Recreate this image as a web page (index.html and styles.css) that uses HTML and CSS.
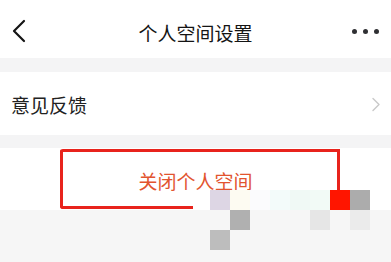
FILE: index.html
```html
<!DOCTYPE html>
<html lang="zh">
<head>
<meta charset="utf-8">
<link rel="stylesheet" href="styles.css">
</head>
<body>
<div class="page">
  <header class="nav">
    <svg class="back" width="14" height="24" viewBox="0 0 14 24"><path d="M12 2 L2 12 L12 22" fill="none" stroke="#151515" stroke-width="2.2" stroke-linecap="round" stroke-linejoin="round"/></svg>
    <h1 class="title">个人空间设置</h1>
    <div class="more"><span></span><span></span><span></span></div>
  </header>
  <div class="band"></div>
  <div class="row">
    <span class="row-label">意见反馈</span>
    <svg class="chev" width="10" height="15" viewBox="0 0 10 15"><path d="M2 1.5 L8 7.5 L2 13.5" fill="none" stroke="#c9c9c9" stroke-width="1.4" stroke-linecap="round" stroke-linejoin="round"/></svg>
  </div>
  <div class="band band2"></div>
  <div class="action">
    <span class="action-label">关闭个人空间</span>
  </div>
  <div class="footer"></div>

  <div class="mark"></div>
  <div class="px" style="left:210px;top:190px;background:#ddd6e4"></div>
  <div class="px" style="left:230px;top:190px;background:#fdfbf2"></div>
  <div class="px" style="left:250px;top:190px;background:#fbfbfd"></div>
  <div class="px" style="left:270px;top:190px;background:#f3fbfa"></div>
  <div class="px" style="left:290px;top:190px;background:#f0f9f5"></div>
  <div class="px" style="left:310px;top:190px;background:#f2faf6"></div>
  <div class="px" style="left:330px;top:190px;background:#ff1500"></div>
  <div class="px" style="left:350px;top:190px;background:#acacac"></div>
  <div class="px" style="left:230px;top:210px;background:#b0b0b0"></div>
  <div class="px" style="left:310px;top:210px;background:#e6e6e6"></div>
  <div class="px" style="left:350px;top:210px;background:#ebebeb"></div>
  <div class="px" style="left:210px;top:230px;background:#bdbdbd"></div>
</div>
</body>
</html>
```
FILE: styles.css
```css
* { box-sizing: border-box; margin: 0; padding: 0; }
html, body { width: 391px; height: 262px; overflow: hidden; }
body {
  background: #f6f6f6;
  font-family: "Noto Sans CJK SC", "Noto Sans", sans-serif;
}
.page { position: relative; width: 391px; height: 262px; }
.nav {
  height: 58px;
  background: #fff;
  display: flex;
  align-items: center;
  justify-content: center;
  position: relative;
}
.back { position: absolute; left: 12px; top: 19px; }
.title {
  font-size: 19px;
  font-weight: 400;
  color: #141414;
  line-height: 1;
  margin-top: 7px;
}
.more {
  position: absolute;
  right: 12px;
  top: 29px;
  display: flex;
  gap: 6px;
}
.more span {
  width: 5px; height: 5px;
  border-radius: 50%;
  background: #2f3033;
}
.band { height: 14px; background: #f4f4f5; }
.band2 { height: 13px; }
.row {
  height: 63px;
  background: #fff;
  display: flex;
  align-items: center;
  justify-content: space-between;
  padding: 0 10px 0 11px;
}
.row-label { font-size: 19px; color: #222; line-height: 1; margin-top: 1px; }
.chev { margin-top: 2px; }
.action {
  height: 62px;
  background: #fff;
  display: flex;
  align-items: center;
  justify-content: center;
}
.action-label {
  font-size: 19px;
  color: #e2542f;
  line-height: 1;
  margin-top: 3px;
}
.footer { height: 52px; background: #f6f6f6; }
.mark {
  position: absolute;
  left: 60px;
  top: 149px;
  width: 280px;
  height: 60px;
  border-top: 3px solid #e8231c;
  border-left: 3px solid #e8231c;
  border-radius: 3px 0 0 3px;
}
.mark::before {
  content: "";
  position: absolute;
  right: 0;
  top: -3px;
  width: 3px;
  height: 41px;
  background: #e8231c;
  border-radius: 0 3px 0 0;
}
.mark::after {
  content: "";
  position: absolute;
  left: -3px;
  top: 54px;
  width: 133px;
  height: 3px;
  background: #e8231c;
  border-radius: 0 0 0 3px;
}
.px { position: absolute; width: 20px; height: 20px; }
```
